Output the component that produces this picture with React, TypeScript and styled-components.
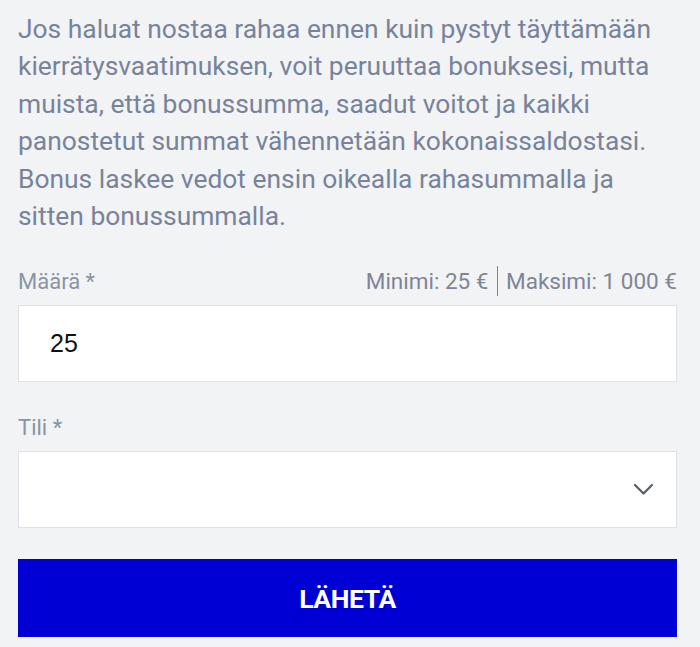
import React from "react";
import styled, { createGlobalStyle } from "styled-components";

const Global = createGlobalStyle`
  html, body { margin: 0; padding: 0; background: #f2f3f5; }
  body { font-family: Roboto, "Noto Sans", sans-serif; }
`;

const Page = styled.div`
  width: 700px;
  min-height: 647px;
  box-sizing: border-box;
  padding: 11px 23px 0 18px;
  background: #f2f3f5;
  display: flex;
  flex-direction: column;
`;

const Info = styled.p`
  margin: 0;
  font-size: 26.4px;
  line-height: 37.4px;
  color: #78839a;
`;

const Field = styled.div<{ $top: number }>`
  display: flex;
  flex-direction: column;
  margin-top: ${(p) => p.$top}px;
`;

const LabelRow = styled.div`
  display: flex;
  justify-content: space-between;
  align-items: center;
  height: 26px;
  margin-bottom: 11px;
`;

const Label = styled.label`
  font-size: 22px;
  color: #8a93a4;
`;

const Limits = styled.div`
  display: flex;
  align-items: center;
  font-size: 22.5px;
  color: #7e8596;
`;

const Sep = styled.span`
  display: inline-block;
  width: 1.5px;
  height: 30px;
  background: #7e8596;
  margin: 0 8px 0 8px;
`;

const Box = styled.div`
  height: 77px;
  box-sizing: border-box;
  background: #fff;
  border: 1px solid #dfe1e6;
  display: flex;
  align-items: center;
  padding: 0 24px 0 31px;
`;

const Value = styled.span`
  font-family: "Liberation Sans", Arial, sans-serif;
  font-size: 25px;
  color: #111;
  flex: 1;
`;

const Chevron = styled.svg`
  width: 21px;
  height: 13px;
  margin-right: -2px;
  margin-top: -1px;
`;

const Button = styled.button`
  margin-top: 31px;
  height: 78px;
  border: none;
  background: #0000d4;
  color: #fff;
  font-family: Roboto, sans-serif;
  font-weight: 700;
  font-size: 26.5px;
  letter-spacing: -0.4px;
  padding: 0;
  cursor: pointer;
`;

export default function App() {
  return (
    <>
      <Global />
      <Page>
        <Info>
          Jos haluat nostaa rahaa ennen kuin pystyt täyttämään
          kierrätysvaatimuksen, voit peruuttaa bonuksesi, mutta muista, että
          bonussumma, saadut voitot ja kaikki panostetut summat vähennetään
          kokonaissaldostasi. Bonus laskee vedot ensin oikealla rahasummalla ja
          sitten bonussummalla.
        </Info>
        <Field $top={33}>
          <LabelRow>
            <Label>Määrä *</Label>
            <Limits>
              <span>Minimi: 25 €</span>
              <Sep />
              <span>Maksimi: 1 000 €</span>
            </Limits>
          </LabelRow>
          <Box>
            <Value>25</Value>
          </Box>
        </Field>
        <Field $top={32}>
          <LabelRow>
            <Label>Tili *</Label>
          </LabelRow>
          <Box>
            <Value />
            <Chevron viewBox="0 0 21 13" fill="none">
              <path
                d="M2 2 L10.5 10.5 L19 2"
                stroke="#575d68"
                strokeWidth="2.2"
                strokeLinecap="round"
                strokeLinejoin="round"
              />
            </Chevron>
          </Box>
        </Field>
        <Button>LÄHETÄ</Button>
      </Page>
    </>
  );
}
